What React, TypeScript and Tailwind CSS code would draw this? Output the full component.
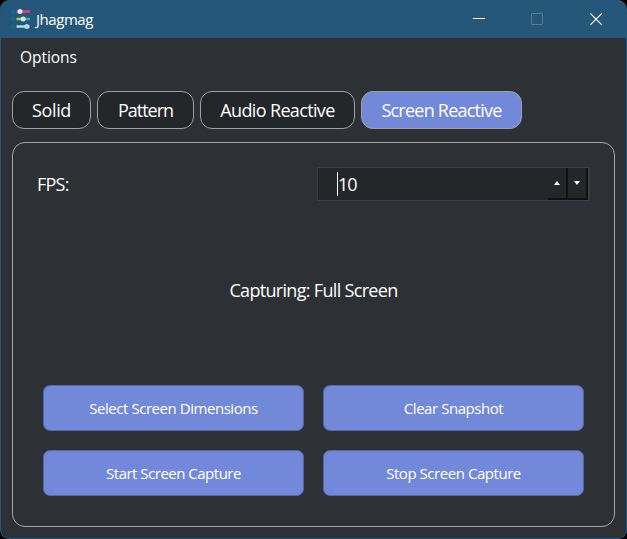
import React from "react";

const tabs = [
  { label: "Solid", box: "w-[79px]", text: "tracking-[-0.4px]" },
  { label: "Pattern", box: "w-[97px]", text: "tracking-[-1px]" },
  { label: "Audio Reactive", box: "w-[155px]", text: "tracking-[-0.65px]" },
  { label: "Screen Reactive", box: "w-[161px]", text: "tracking-[-0.77px]", active: true },
];

const actions = [
  { label: "Select Screen Dimensions", text: "tracking-[-0.45px]" },
  { label: "Clear Snapshot", text: "tracking-[-0.45px]" },
  { label: "Start Screen Capture", text: "tracking-[-0.5px]" },
  { label: "Stop Screen Capture", text: "tracking-[-0.45px]" },
];

function Logo() {
  return (
    <svg width="20" height="20" viewBox="0 0 20 20" className="shrink-0">
      <path d="M1 2.500h4M1 10h4M1 17.500h4" stroke="#176580" strokeWidth="4" />
      <path d="M6.500 2.500h13.500" stroke="#e63b7c" strokeWidth="2.6" />
      <path d="M6.500 10h6" stroke="#a8cf52" strokeWidth="2.6" />
      <path d="M13 10h7" stroke="#14c48c" strokeWidth="2.6" />
      <path d="M6.500 17.500h13" stroke="#9be8ee" strokeWidth="2.6" />
      <circle cx="10" cy="2.5" r="2.5" fill="#dfe6fb" />
      <circle cx="13.2" cy="10" r="2.5" fill="#d5e2fb" />
      <circle cx="16.8" cy="17.500" r="2.5" fill="#b9d3fb" />
    </svg>
  );
}

export default function App() {
  return (
    <div className="h-[539px] w-[627px] bg-black font-['Open_Sans','Noto_Sans',sans-serif] text-white">
      <div className="flex h-full flex-col overflow-hidden rounded-[9px] border border-t-0 border-[#24567c] bg-[#2d3035]">
        <header className="flex h-[38px] shrink-0 items-center bg-[#26577a] pl-[9px]">
          <Logo />
          <span className="ml-[6px] text-[15px] leading-5 tracking-[-0.45px]">Jhagmag</span>
          <svg width="154" height="38" viewBox="0 0 154 38" fill="none" className="ml-auto">
            <path d="M1 18.5h12" stroke="#fff" />
            <rect x="59.5" y="13.5" width="11" height="11" rx="0.5" stroke="#527c99" />
            <path d="M118.300 13.3l11.5 11.5M129.800 13.3L118.300 24.800" stroke="#fff" strokeWidth="1.2" />
          </svg>
        </header>
        <nav className="h-[39px] shrink-0 pl-[19px] text-[15.5px] leading-[39px] tracking-[-0.05px]">Options</nav>

        <div className="mt-[14px] flex gap-[6px] pl-[11px]">
          {tabs.map((t) => (
            <button
              key={t.label}
              className={`h-[38px] rounded-[12px] border border-[#a0a0a0] text-[18px] leading-[36px] whitespace-nowrap ${t.box} ${t.text} ${t.active ? "bg-[#7289da]" : "bg-[#23272a]"}`}
            >
              {t.label}
            </button>
          ))}
        </div>

        <main className="mt-[13px] ml-[11px] flex h-[385px] w-[603px] flex-col rounded-[13px] border border-[#a6a6a6] pt-[24px]">
          <div className="flex h-[34px] items-center justify-between pr-[24px] pl-[24px]">
            <label className="text-[18px] tracking-[-0.75px]">FPS:</label>
            <div className="flex h-[34px] w-[273px] items-stretch border border-r-2 border-[#3c3d3f] bg-[#23272a] pl-[19px]">
              <span className="my-[4px] w-px bg-white" />
              <span className="text-[18px] leading-[33px] tracking-[-1.1px]">10</span>
              <span className="ml-auto flex w-[20px] items-center justify-center border-r-2 border-b-2 border-[#0f1112]">
                <svg width="6" height="4"><path d="M3 0L6 4H0z" fill="#fff" /></svg>
              </span>
              <span className="flex w-[20px] items-center justify-center border-r-2 border-b-2 border-[#0f1112]">
                <svg width="6" height="4"><path d="M0 0h6L3 4z" fill="#fff" /></svg>
              </span>
            </div>
          </div>

          <p className="mt-[76px] text-center text-[18px] leading-[26px] tracking-[-0.68px]">Capturing: Full Screen</p>

          <div className="mt-[82px] grid grid-cols-[261px_261px] gap-x-[19px] gap-y-[19px] pl-[30px]">
            {actions.map((a) => (
              <button
                key={a.label}
                className={`h-[46px] rounded-[7px] border border-[#5366a8] bg-[#7289da] text-[15px] leading-[44px] whitespace-nowrap ${a.text}`}
              >
                {a.label}
              </button>
            ))}
          </div>
        </main>
      </div>
    </div>
  );
}
